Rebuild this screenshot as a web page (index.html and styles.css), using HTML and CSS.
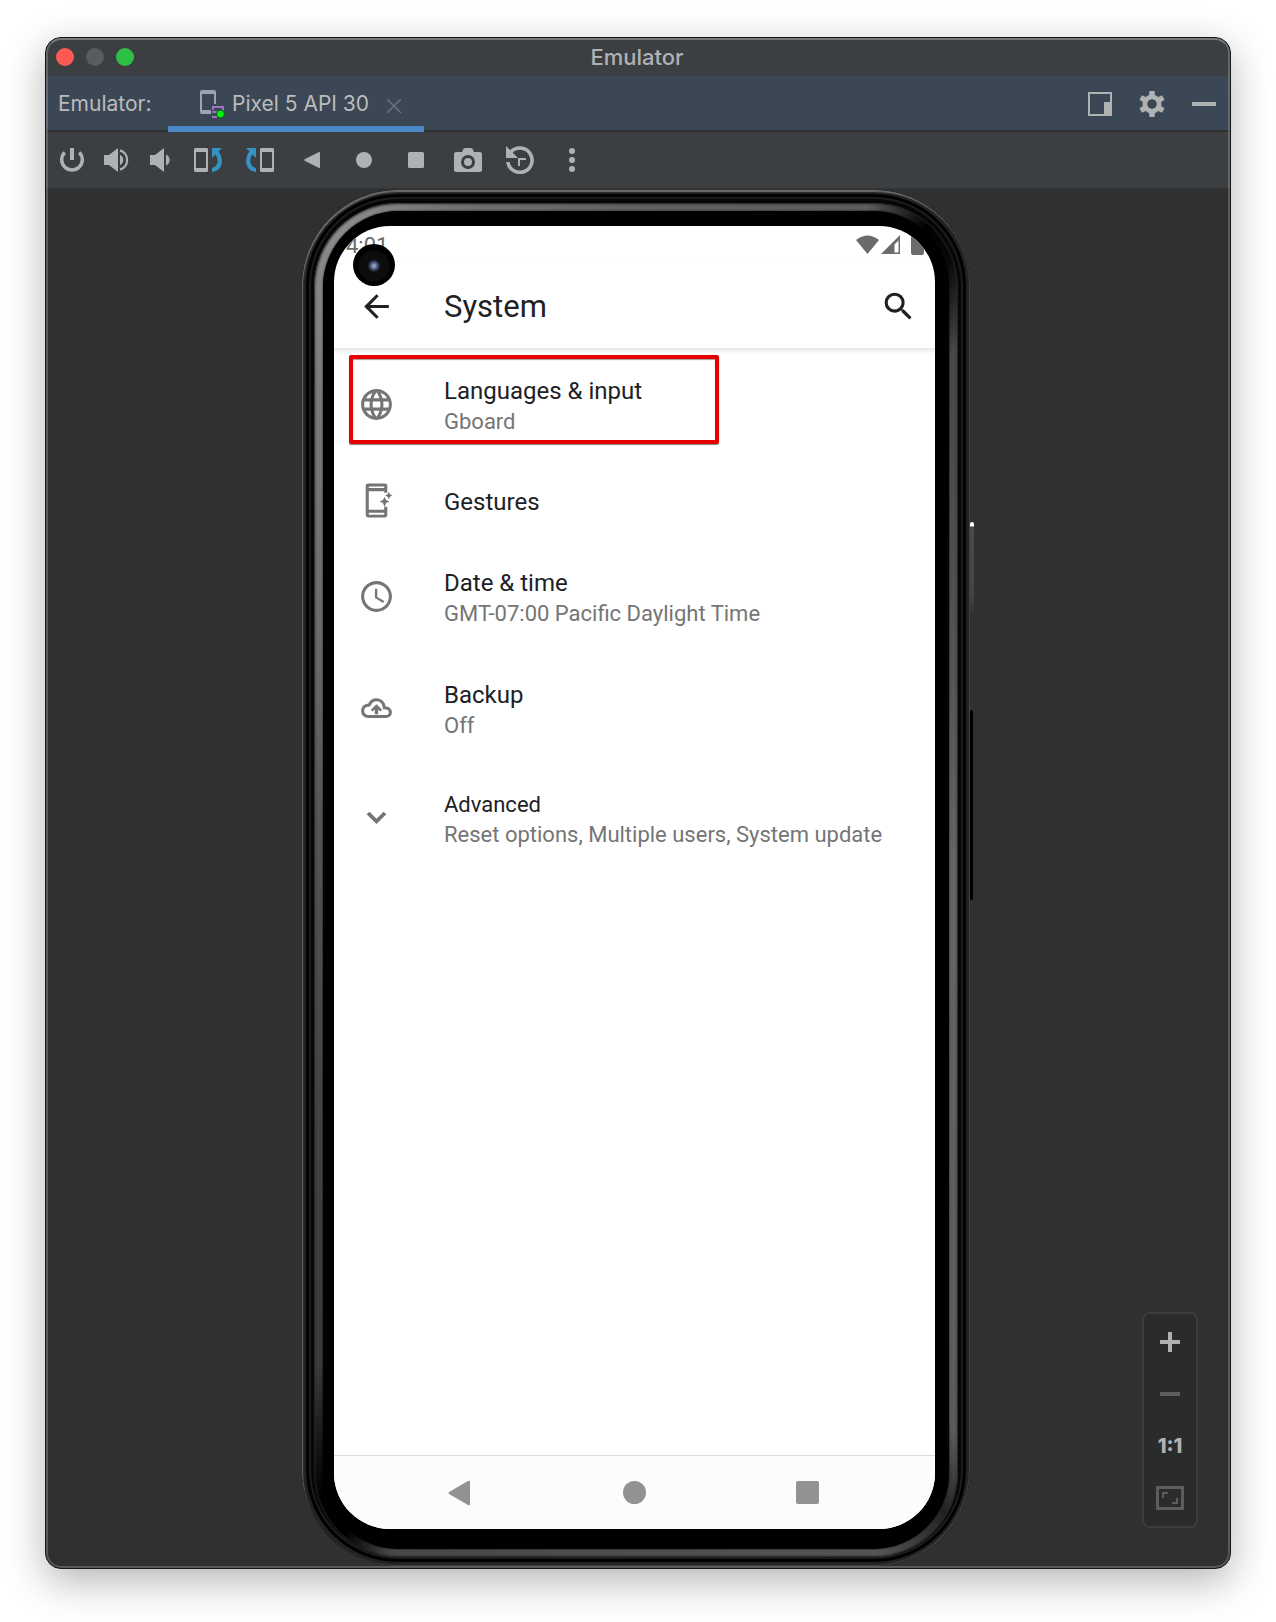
FILE: index.html
```html
<!DOCTYPE html>
<html lang="en">
<head>
<meta charset="utf-8">
<meta name="viewport" content="width=device-width, initial-scale=1">
<title>Emulator</title>
<link rel="stylesheet" href="styles.css">
</head>
<body>
<main class="window">
  <header class="titlebar">
    <div class="lights">
      <button class="light light-close" aria-label="Close"></button>
      <button class="light light-min" aria-label="Minimize"></button>
      <button class="light light-max" aria-label="Zoom"></button>
    </div>
    <h1 class="window-title">Emulator</h1>
  </header>

  <div class="tabs">
    <span class="tabs-label">Emulator:</span>
    <div class="tab">
      <svg class="tab-icon" width="26" height="30" viewBox="0 0 26 30" aria-hidden="true">
        <path fill="#9aa7b0" fill-rule="evenodd" d="M2 1h12a2 2 0 0 1 2 2v12h-2V5H2v16h9v4H2a2 2 0 0 1-2-2V3a2 2 0 0 1 2-2z"/>
        <path fill="none" stroke="#9876c0" stroke-width="2" d="M13 21v-3h10v5M12 23h5M12 28h5"/>
        <circle cx="20.500" cy="25" r="4" fill="#00f20c" stroke="#1f4a2b"/>
      </svg>
      <span>Pixel 5 API 30</span>
      <button class="tab-close" aria-label="Close tab">
        <svg width="16" height="16" viewBox="0 0 16 16"><path d="M1 1l14 14M15 1L1 15" stroke="#66727e" stroke-width="1.600"/></svg>
      </button>
    </div>
    <div class="tabs-actions">
      <button class="tool" aria-label="Window mode">
        <svg width="28" height="28" viewBox="0 0 28 28"><path d="M3 3h22v22H3z" fill="none" stroke="#afb1b3" stroke-width="2"/><path d="M18 12h8v14h-8z" fill="#afb1b3"/></svg>
      </button>
      <button class="tool" aria-label="Settings">
        <svg width="28" height="28" viewBox="0 0 28 28"><g fill="#afb1b3"><path fill-rule="evenodd" d="M14 4.500a9.500 9.500 0 1 1 0 19 9.500 9.500 0 0 1 0-19zm0 4.700a4.800 4.800 0 1 0 0 9.600 4.800 4.800 0 0 0 0-9.600z"/><path id="tooth" d="M11 6l.4-5h5.200l.4 5z"/><use href="#tooth" transform="rotate(60 14 14)"/><use href="#tooth" transform="rotate(120 14 14)"/><use href="#tooth" transform="rotate(180 14 14)"/><use href="#tooth" transform="rotate(240 14 14)"/><use href="#tooth" transform="rotate(300 14 14)"/></g></svg>
      </button>
      <button class="tool" aria-label="Hide">
        <svg width="28" height="28" viewBox="0 0 28 28"><path d="M2 12h24v4H2z" fill="#afb1b3"/></svg>
      </button>
    </div>
  </div>

  <div class="toolbar" role="toolbar" aria-label="Emulator controls">
    <div class="tool-group tool-group-tight">
      <button class="tool" aria-label="Power">
        <svg width="28" height="28" viewBox="0 0 28 28"><path d="M6.700 6.500a10.300 10.300 0 1 0 14.600 0" fill="none" stroke="#afb1b3" stroke-width="3.500"/><path d="M12 2h4v12h-4z" fill="#afb1b3"/></svg>
      </button>
      <button class="tool" aria-label="Volume up">
        <svg width="28" height="28" viewBox="0 0 28 28"><path d="M2 9h5l9-7v24l-9-7H2zM18 9a5.500 5.500 0 0 1 0 10z" fill="#afb1b3"/><path d="M18 4.400a10 10 0 0 1 0 19.200" fill="none" stroke="#afb1b3" stroke-width="2.200"/></svg>
      </button>
      <button class="tool" aria-label="Volume down">
        <svg width="28" height="28" viewBox="0 0 28 28"><path d="M4 9h5l9-7v24l-9-7H4zM20 8.500a6 6 0 0 1 0 11z" fill="#afb1b3"/></svg>
      </button>
    </div>
    <div class="tool-group">
      <button class="tool" aria-label="Rotate left">
        <svg width="28" height="28" viewBox="0 0 28 28"><path fill="#afb1b3" fill-rule="evenodd" d="M1 2h12l1 1v22l-1 1H1l-1-1V3zM2 6v16h10V6z"/><path fill="#3592c4" d="M18 2h10l-3.500 3.500C30 12 29.500 25 18 26v-4c6.500-1.500 7-9 3.500-13.500L18 12z"/></svg>
      </button>
      <button class="tool" aria-label="Rotate right">
        <svg width="28" height="28" viewBox="0 0 28 28"><g transform="matrix(-1 0 0 1 28 0)"><path fill="#afb1b3" fill-rule="evenodd" d="M1 2h12l1 1v22l-1 1H1l-1-1V3zM2 6v16h10V6z"/><path fill="#3592c4" d="M18 2h10l-3.500 3.500C30 12 29.500 25 18 26v-4c6.500-1.500 7-9 3.500-13.500L18 12z"/></g></svg>
      </button>
      <button class="tool" aria-label="Back">
        <svg width="28" height="28" viewBox="0 0 28 28"><path d="M21 6q1-.4 1 .8v14.400q0 1.200-1 .8L6.600 14.800q-1-.8 0-1.600z" fill="#afb1b3"/></svg>
      </button>
      <button class="tool" aria-label="Home">
        <svg width="28" height="28" viewBox="0 0 28 28"><circle cx="14" cy="14" r="8" fill="#afb1b3"/></svg>
      </button>
      <button class="tool" aria-label="Overview">
        <svg width="28" height="28" viewBox="0 0 28 28"><rect x="6" y="6" width="16" height="16" rx="1.500" fill="#afb1b3"/></svg>
      </button>
      <button class="tool" aria-label="Take screenshot">
        <svg width="28" height="28" viewBox="0 0 28 28"><path d="M11 2h6q1.500 0 2 1.500l.8 2.500H26q2 0 2 2v16q0 2-2 2H2q-2 0-2-2V8q0-2 2-2h6.200L9 3.500Q9.500 2 11 2z" fill="#afb1b3"/><circle cx="14" cy="16" r="5.500" fill="#afb1b3" stroke="#3c3f41" stroke-width="3"/></svg>
      </button>
      <button class="tool" aria-label="Snapshots">
        <svg width="28" height="28" viewBox="0 0 28 28"><path d="M1.800 16a12.200 12.200 0 1 0 3-10" fill="none" stroke="#afb1b3" stroke-width="3.600"/><path d="M0 0l12 12H0z" fill="#afb1b3"/><path d="M13 20v-7h7" fill="none" stroke="#afb1b3" stroke-width="2"/></svg>
      </button>
      <button class="tool" aria-label="More">
        <svg width="28" height="28" viewBox="0 0 28 28" fill="#afb1b3"><circle cx="14" cy="5" r="3"/><circle cx="14" cy="14" r="3"/><circle cx="14" cy="23" r="3"/></svg>
      </button>
    </div>
  </div>

  <section class="stage">
    <div class="phone">
      <span class="side-key side-power"></span>
      <span class="side-key side-volume"></span>
      <div class="rim">
        <div class="bezel">
          <div class="screen">
            <span class="camera"></span>
            <div class="status">
              <span>4:01</span>
              <svg width="76" height="22" viewBox="0 0 76 22" fill="#6b6b6b" aria-hidden="true">
                <path d="M11.500 20L0 6Q11.500-3 23 6z"/>
                <path fill-rule="evenodd" d="M44 1v19H25zM42.500 6.500L38.500 10.500v8h4z"/>
                <path d="M56 1h3V0h6v1h1q2 0 2 2v16q0 2-2 2h-9q-2 0-2-2V3q0-2 1-2z"/>
              </svg>
            </div>
            <div class="appbar">
              <button class="icon-button" aria-label="Navigate up">
                <svg width="37" height="37" viewBox="0 0 24 24"><path d="M20 11H7.830l5.590-5.590L12 4l-8 8 8 8 1.410-1.410L7.830 13H20z" fill="#202124"/></svg>
              </button>
              <h2 class="appbar-title">System</h2>
              <button class="icon-button" aria-label="Search">
                <svg width="37" height="37" viewBox="0 0 24 24"><path d="M15.500 14h-.79l-.28-.27A6.470 6.470 0 0 0 16 9.500 6.500 6.500 0 1 0 9.500 16c1.610 0 3.090-.59 4.230-1.570l.27.28v.79l5 4.990L20.490 19zm-6 0a4.500 4.500 0 1 1 0-9 4.500 4.500 0 0 1 0 9z" fill="#202124"/></svg>
              </button>
            </div>
            <ul class="list">
              <li><a href="#languages" class="row row-marked">
                <svg width="37" height="37" viewBox="0 0 24 24" fill="#757575"><path d="M11.990 2C6.470 2 2 6.480 2 12s4.470 10 9.990 10C17.520 22 22 17.520 22 12S17.520 2 11.990 2zm6.930 6h-2.950a15.650 15.650 0 0 0-1.380-3.560A8.030 8.030 0 0 1 18.920 8zM12 4.040c.83 1.200 1.480 2.530 1.910 3.960h-3.820c.43-1.430 1.080-2.760 1.910-3.960zM4.260 14C4.100 13.360 4 12.690 4 12s.1-1.360.26-2h3.380c-.08.660-.14 1.320-.14 2s.06 1.340.14 2zm.82 2h2.950c.32 1.250.78 2.450 1.380 3.560A7.990 7.990 0 0 1 5.080 16zm2.950-8H5.080a7.990 7.990 0 0 1 4.330-3.560A15.650 15.650 0 0 0 8.030 8zM12 19.960c-.83-1.200-1.480-2.530-1.910-3.960h3.820A14.090 14.090 0 0 1 12 19.960zM14.340 14H9.660c-.09-.660-.16-1.320-.16-2s.07-1.350.16-2h4.680c.09.650.16 1.320.16 2s-.07 1.340-.16 2zm.25 5.560c.6-1.110 1.060-2.310 1.380-3.560h2.950a8.030 8.030 0 0 1-4.330 3.560zM16.360 14c.08-.660.14-1.320.14-2s-.06-1.340-.14-2h3.380c.16.640.26 1.310.26 2s-.1 1.360-.26 2z"/></svg>
                <span class="row-text"><span class="row-title">Languages &amp; input</span><span class="row-summary">Gboard</span></span>
              </a></li>
              <li><a href="#gestures" class="row row-single">
                <svg width="37" height="37" viewBox="0 0 24 24" fill="#757575"><path fill-rule="evenodd" d="M6.600 1h11q1.400 0 1.400 1.400V7h-2V6H7v12h10v-2h2v5.600q0 1.400-1.400 1.400h-11Q5 23 5 21.600V2.400Q5 1 6.600 1zM7 2.900v1h10v-1zM7 20v1.200h10V20z"/><path d="M17.200 9.500l1 2.200 2.200 1-2.200 1-1 2.500-1-2.500-2.200-1 2.200-1zM20 6.500l.8 1.500 1.500.8-1.500.8-.8 1.500-.8-1.500-1.500-.8 1.500-.8z"/></svg>
                <span class="row-text"><span class="row-title">Gestures</span></span>
              </a></li>
              <li><a href="#date" class="row">
                <svg width="37" height="37" viewBox="0 0 24 24" fill="#757575"><path d="M11.990 2C6.470 2 2 6.480 2 12s4.470 10 9.990 10C17.520 22 22 17.520 22 12S17.520 2 11.990 2zM12 20a8 8 0 1 1 0-16 8 8 0 0 1 0 16zM12.500 7H11v6l5.250 3.150.75-1.230-4.500-2.670z"/></svg>
                <span class="row-text"><span class="row-title">Date &amp; time</span><span class="row-summary">GMT-07:00 Pacific Daylight Time</span></span>
              </a></li>
              <li><a href="#backup" class="row">
                <svg width="37" height="37" viewBox="0 0 24 24" fill="#757575"><path d="M18.500 11.700l-1.400-.1-.3-1.400A4.950 4.950 0 0 0 12 6.300c-1.800 0-3.500 1-4.300 2.600l-.5.9-1 .1A3.560 3.560 0 0 0 3 13.500 3.600 3.600 0 0 0 6.600 17.200h11.700A2.750 2.750 0 0 0 21 14.500c0-1.400-1.100-2.700-2.500-2.800z" fill="none" stroke="#757575" stroke-width="2"/><path d="M8.300 12.800L12 9.200l3.700 3.600-1.100 1.100-1.500-1.300V15.800h-2.200v-3.200l-1.500 1.300z"/></svg>
                <span class="row-text"><span class="row-title">Backup</span><span class="row-summary">Off</span></span>
              </a></li>
              <li><a href="#advanced" class="row row-advanced">
                <svg width="37" height="37" viewBox="0 0 24 24" fill="#757575"><path d="M7.410 7.590L12 12.170l4.590-4.580L18.400 9.200 12 15.600 5.600 9.200z"/></svg>
                <span class="row-text"><span class="row-title">Advanced</span><span class="row-summary">Reset options, Multiple users, System update</span></span>
              </a></li>
            </ul>
            <nav class="navbar" aria-label="System navigation">
              <button class="nav-button" aria-label="Back"><svg width="44" height="44" viewBox="0 0 44 44"><path d="M29 10q2-1 2 1v22q0 2-2 1L10 23q-1-1 0-2z" fill="#929292"/></svg></button>
              <button class="nav-button" aria-label="Home"><svg width="44" height="44" viewBox="0 0 44 44"><circle cx="21.500" cy="21.500" r="11.500" fill="#929292"/></svg></button>
              <button class="nav-button" aria-label="Recent apps"><svg width="44" height="44" viewBox="0 0 44 44"><rect x="9" y="10" width="23" height="23" rx="2" fill="#929292"/></svg></button>
            </nav>
          </div>
        </div>
      </div>
    </div>

    <div class="zoom-panel">
      <button class="zoom-button" aria-label="Zoom in"><svg width="28" height="28" viewBox="0 0 28 28"><path d="M12 4h4v8h8v4h-8v8h-4v-8H4v-4h8z" fill="#afb1b3"/></svg></button>
      <button class="zoom-button" aria-label="Zoom out" disabled><svg width="28" height="28" viewBox="0 0 28 28"><path d="M4 12h20v4H4z" fill="#5c5d5e"/></svg></button>
      <button class="zoom-button">1:1</button>
      <button class="zoom-button" aria-label="Zoom to fit" disabled><svg width="28" height="28" viewBox="0 0 28 28"><path d="M1.500 3.500h25v21h-25z" fill="none" stroke="#5c5d5e" stroke-width="3"/><path d="M7 14V9h5M21 14v5h-5" fill="none" stroke="#5c5d5e" stroke-width="2"/></svg></button>
    </div>
  </section>
</main>
</body>
</html>
```
FILE: styles.css
```css
*,
*::before,
*::after {
  box-sizing: border-box;
}

body {
  margin: 0;
  min-height: 100vh;
  padding: 37px 45px 53px;
  display: flex;
  background: #fff;
  font-family: Inter, "Liberation Sans", sans-serif;
  font-size: 22px;
  color: #bbb;
}

button {
  margin: 0;
  padding: 0;
  border: 0;
  background: none;
  color: inherit;
  font: inherit;
}

svg {
  display: block;
  flex: none;
}

.window {
  position: relative;
  flex: 1;
  display: flex;
  flex-direction: column;
  border: 1px solid #161616;
  border-radius: 16px;
  overflow: hidden;
  background: #2f3032;
  box-shadow: 0 12px 40px rgba(0, 0, 0, 0.3);
}

.window::after {
  content: "";
  position: absolute;
  inset: 0;
  border: 2px solid rgba(255, 255, 255, 0.2);
  border-top-color: rgba(255, 255, 255, 0.3);
  border-radius: 15px;
  pointer-events: none;
}

.titlebar {
  display: grid;
  grid-template-columns: 1fr auto 1fr;
  align-items: center;
  height: 38px;
  padding: 0 12px 0 10px;
  background: #3c3f41;
}

.lights {
  display: flex;
  gap: 12px;
}

.light {
  width: 18px;
  height: 18px;
  border-radius: 50%;
}

.light-close {
  background: #ff5a52;
}

.light-min {
  background: #5a5b5d;
}

.light-max {
  background: #2dc044;
}

.window-title {
  margin: 0;
  font-size: 22px;
  font-weight: 500;
  line-height: 28px;
  color: #b1b2b3;
}

.tabs {
  display: flex;
  height: 56px;
  padding: 0 12px;
  background: #3c4755;
  box-shadow: inset 0 -2px #323232;
}

.tabs-label {
  width: 110px;
  line-height: 56px;
}

.tab {
  display: flex;
  align-items: center;
  gap: 6px;
  width: 256px;
  padding: 0 22px 0 32px;
  border-bottom: 6px solid #4a88c7;
  line-height: 56px;
}

.tab span {
  height: 50px;
}

.tabs-label,
.tab {
  font-size: 21px;
}

.tab-close {
  margin: 10px 0 0 auto;
}

.tab-icon {
  margin-top: 6px;
}

.tabs-actions {
  display: flex;
  align-items: center;
  gap: 24px;
  height: 56px;
  margin-left: auto;
}

.toolbar {
  display: flex;
  align-items: center;
  gap: 20px;
  height: 58px;
  padding: 0 12px;
  border-bottom: 2px solid #323232;
  background: #3c3f41;
}

.tool-group {
  display: flex;
  gap: 24px;
}

.tool-group-tight {
  gap: 16px;
}

.stage {
  position: relative;
  flex: 1;
  display: flex;
  justify-content: center;
  padding: 0 4px 2px 0;
}

.phone {
  position: relative;
  display: flex;
  width: 668px;
  max-width: 100%;
  padding: 13px 12px 9px;
  border-radius: 96px;
  background: #060606;
  box-shadow: inset 1px 2px 1px #6b6b6b, inset -1px -1px 1px #444, inset 0 0 0 4px #222, inset 0 0 0 7px #000, inset 0 0 0 9px #1c1c1c;
}

.side-key {
  position: absolute;
  left: 100%;
  width: 4px;
  border-radius: 2px;
}

.side-power {
  top: 332px;
  height: 90px;
  background: linear-gradient(#fff 4px, #4a4a4a 5px, #444 80%, #333);
}

.side-volume {
  top: 520px;
  width: 3px;
  height: 190px;
  background: #000;
}

.rim {
  flex: 1;
  display: flex;
  min-width: 0;
  padding: 8px 9px;
  border-radius: 84px;
  background: conic-gradient(#606060 0deg, #5c5c5c 19deg, #000 24deg, #0a0a0a 27deg, #484848 31deg, #666 90deg, #5c5c5c 150deg, #222 154deg, #555 160deg, #484848 200deg, #000 204deg, #000 207deg, #3a3a3a 213deg, #4a4a4a 250deg, #555 280deg, #777 325deg, #8c8c8c 336deg, #707070 345deg, #606060 360deg);
  box-shadow: inset 0 0 2px 1px #222;
}

.bezel {
  flex: 1;
  display: flex;
  min-width: 0;
  padding: 15px 14px 20px 11px;
  border-radius: 76px;
  background: #000;
  box-shadow: 0 0 2px #000;
}

.screen {
  position: relative;
  flex: 1;
  display: flex;
  flex-direction: column;
  min-width: 0;
  border-radius: 56px;
  overflow: hidden;
  background: #fff;
  color: #202124;
  font-family: Roboto, sans-serif;
}

.camera {
  position: absolute;
  top: 18px;
  left: 19px;
  width: 42px;
  height: 42px;
  border-radius: 50%;
  background: radial-gradient(circle at 50% 52%, #8fa3c8 0 1px, #3b4a68 4px, #14161c 6px, #0c0c0c 7px 15px, #000 16px);
}

.status {
  display: flex;
  align-items: center;
  justify-content: space-between;
  height: 38px;
  padding: 0 3px 0 12px;
  color: #6b6b6b;
  font-size: 22px;
}

.appbar {
  display: flex;
  align-items: center;
  height: 85px;
  padding: 0 18px 0 24px;
  border-bottom: 1px solid #e8e8e8;
  box-shadow: 0 2px 4px rgba(0, 0, 0, 0.1);
}

.appbar-title {
  flex: 1;
  margin: 0 0 0 49px;
  padding-top: 2px;
  font-size: 31px;
  font-weight: 400;
  line-height: 40px;
}

.list {
  flex: 1;
  margin: 0;
  padding: 0;
  list-style: none;
}

.row {
  position: relative;
  display: flex;
  align-items: center;
  gap: 49px;
  height: 112px;
  padding: 0 24px 2px;
  color: inherit;
  text-decoration: none;
}

.row-single {
  height: 80px;
}

.row-advanced {
  height: 108px;
}

.row-marked::after {
  content: "";
  position: absolute;
  top: 6px;
  left: 15px;
  width: 370px;
  height: 89px;
  border: 4px solid #e60000;
  border-radius: 2px;
  box-shadow: 0 1px 1px rgba(0, 0, 0, 0.5), inset 0 1px 1px rgba(0, 0, 0, 0.4);
}

.row-text {
  display: flex;
  flex-direction: column;
  padding-top: 4px;
}

.row-title {
  font-size: 24px;
  line-height: 32px;
}

.row-summary {
  color: #757575;
  font-size: 22px;
  line-height: 30px;
}

.row-advanced .row-title {
  font-size: 22px;
  line-height: 30px;
}

.navbar {
  display: flex;
  align-items: center;
  justify-content: center;
  gap: 130px;
  height: 74px;
  border-top: 1px solid #dcdcdc;
  background: #fcfcfc;
}

.zoom-panel {
  position: absolute;
  right: 32px;
  bottom: 40px;
  display: flex;
  flex-direction: column;
  width: 56px;
  padding: 2px 0;
  border: 2px solid #3c3d3e;
  border-radius: 8px;
  background: #2b2b2b;
}

.zoom-button {
  display: flex;
  align-items: center;
  justify-content: center;
  height: 52px;
  color: #afb1b3;
  font-size: 20px;
  font-weight: 800;
}
```
